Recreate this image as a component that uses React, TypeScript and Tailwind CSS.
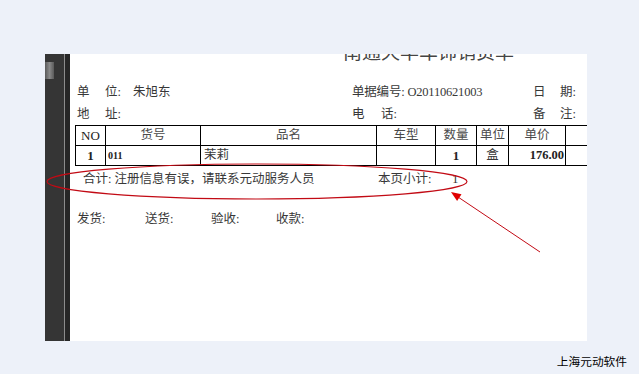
const serif = "font-['Liberation_Serif','Noto_Sans_CJK_SC',serif]";

const cols = [30, 95, 176, 59, 41, 32, 57, 60];

export default function App() {
  return (
    <div className="relative h-[374px] w-[639px] overflow-hidden bg-[#edf1f9]">
      <div className="h-[54px]" />
      <div className="ml-[45px] flex h-[287px] w-[542px]">
        {/* viewer side strip */}
        <div className="w-[19px] bg-[#353535] pt-[8px]">
          <div className="h-[17px] w-[9px] bg-gradient-to-r from-[#5a5a5a] via-[#8a8a8a] to-[#5a5a5a]" />
        </div>
        <div className="w-px bg-[#8c8c8c]" />
        <div className="w-[5px] bg-[#262626]" />

        {/* the printed page */}
        <div className={`relative flex-1 overflow-hidden bg-white text-[12.5px] text-[#383838] ${serif}`}>
          <div className="flow-root h-[27px]">
            <div className="-mt-[13px] ml-[273px] whitespace-nowrap font-['Noto_Sans_CJK_SC',sans-serif] text-[19px] leading-[19px] text-[#444]">
              南通天华车饰销货单
            </div>
          </div>

          <div className="flex h-[22px] items-center whitespace-nowrap pl-[7px]">
            <span className="w-[28px]">单</span>
            <span className="w-[28px]">位:</span>
            <span className="w-[219px]">朱旭东</span>
            <span className="w-[181px] tracking-[-0.2px]">单据编号: O20110621003</span>
            <span className="w-[27px]">日</span>
            <span>期:</span>
          </div>
          <div className="flex h-[22px] items-center whitespace-nowrap pl-[7px]">
            <span className="w-[28px]">地</span>
            <span className="w-[247px]">址:</span>
            <span className="w-[29px]">电</span>
            <span className="w-[152px]">话:</span>
            <span className="w-[27px]">备</span>
            <span>注:</span>
          </div>

          <table className="ml-[5px] w-[550px] table-fixed border-collapse text-center leading-[19px]">
            <colgroup>
              {cols.map((w, i) => (
                <col key={i} style={{ width: w }} />
              ))}
            </colgroup>
            <thead>
              <tr className="text-[#4a4a4a]">
                <th className="border border-black font-normal text-[13px] text-[#222]">NO</th>
                <th className="border border-black font-normal">货号</th>
                <th className="border border-black font-normal">品名</th>
                <th className="border border-black font-normal">车型</th>
                <th className="border border-black font-normal">数量</th>
                <th className="border border-black font-normal">单位</th>
                <th className="border border-black font-normal">单价</th>
                <th className="border border-black font-normal" />
              </tr>
            </thead>
            <tbody>
              <tr>
                <td className="border border-black text-[13px] font-bold text-[#222]">1</td>
                <td className="border border-black pl-[2px] text-left text-[10px] font-bold text-[#222]">011</td>
                <td className="border border-black pl-[3px] text-left">茉莉</td>
                <td className="border border-black" />
                <td className="border border-black text-[13px] font-bold text-[#222]">1</td>
                <td className="border border-black">盒</td>
                <td className="border border-black pr-[1px] text-right text-[12.5px] font-bold text-[#222]">176.00</td>
                <td className="border border-black" />
              </tr>
            </tbody>
          </table>

          <div className="flex h-[26px] items-center whitespace-nowrap pl-[13px]">
            <span className="w-[295px]">合计: 注册信息有误，请联系元动服务人员</span>
            <span className="w-[74px]">本页小计:</span>
            <span className="text-[13px]">1</span>
          </div>

          <div className="mt-[16px] flex h-[22px] items-center whitespace-nowrap pl-[7px]">
            <span className="w-[68px]">发货:</span>
            <span className="w-[66px]">送货:</span>
            <span className="w-[65px]">验收:</span>
            <span>收款:</span>
          </div>
        </div>
      </div>

      <div className="mt-[13px] flex justify-end pr-[12px]">
        <span className="font-['Noto_Sans_CJK_SC',sans-serif] text-[11.7px] leading-[14px] text-black">
          上海元动软件
        </span>
      </div>

      {/* red annotation drawn on top of the screenshot */}
      <svg className="pointer-events-none absolute inset-0" width="639" height="374" viewBox="0 0 639 374">
        <ellipse cx="257" cy="181.5" rx="210" ry="17.5" fill="none" stroke="#c20a14" strokeWidth="1.2" />
        <line x1="540" y1="252" x2="458" y2="197" stroke="#c20a14" strokeWidth="1" />
        <polygon points="451,192 461.5,194.3 457.1,200.9" fill="#e00000" />
      </svg>
    </div>
  );
}
